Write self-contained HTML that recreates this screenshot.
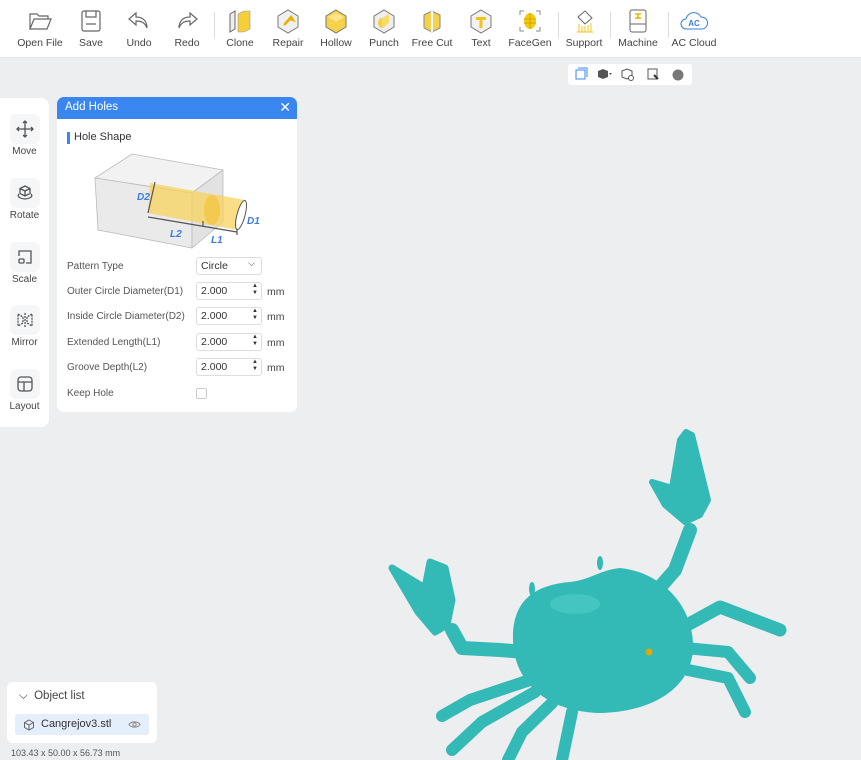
<!DOCTYPE html>
<html><head><meta charset="utf-8"><style>
*{margin:0;padding:0;box-sizing:border-box}
body{width:861px;height:760px;overflow:hidden;background:#eceef0;font-family:"Liberation Sans",sans-serif;color:#333;position:relative}
.tb{position:absolute;left:0;top:0;width:861px;height:58px;background:#fff;border-bottom:1px solid #e4e6e8}
.ti{position:absolute;top:8px;width:60px;margin-left:-30px;text-align:center;font-size:10.5px;color:#444}
.ti svg{display:block;margin:0 auto 3px;width:26px;height:26px}
.sep{position:absolute;top:12px;width:1px;height:26px;background:#ddd}
.side{position:absolute;left:0;top:98px;width:49px;height:329px;background:#fff;border-radius:0 8px 8px 0}
.si{position:absolute;left:0;width:49px;text-align:center;font-size:10px;color:#444}
.si .b{width:30px;height:30px;margin:0 auto 2px;background:#f4f6f8;border-radius:6px;display:flex;align-items:center;justify-content:center}
.dlg{position:absolute;left:57px;top:97px;width:240px;height:315px;background:#fff;border-radius:7px;overflow:hidden}
.hd{height:22px;background:#3a86f0;color:#fff;font-size:11.5px;padding:4px 0 0 8px;position:relative}
.row{position:absolute;left:10px;font-size:10px;color:#555}
.inp{position:absolute;left:139px;width:66px;height:18px;border:1px solid #ddd;border-radius:3px;font-size:10.5px;padding:2px 0 0 4px;color:#333}
.mm{position:absolute;left:210px;font-size:10.5px;color:#444}
</style></head><body>
<div class="tb">
<div class="ti" style="left:40px"><svg viewBox="0 0 26 26" fill="none" stroke="#666" stroke-width="1.2"><path d="M3 6h7l2 2h9v3H7L3 21z M3 21l4-10h17l-4 10z"/></svg>Open File</div>
<div class="ti" style="left:91px"><svg viewBox="0 0 26 26" fill="none" stroke="#666" stroke-width="1.2"><rect x="4" y="3" width="18" height="20" rx="2"/><path d="M8 3v6h10V3M8 16h10"/></svg>Save</div>
<div class="ti" style="left:139px"><svg viewBox="0 0 26 26" fill="none" stroke="#666" stroke-width="1.2"><path d="M10 5L3 11l7 6v-4c6 0 9 2 11 7 0-7-4-11-11-11z"/></svg>Undo</div>
<div class="ti" style="left:187px"><svg viewBox="0 0 26 26" fill="none" stroke="#666" stroke-width="1.2"><path d="M16 5l7 6-7 6v-4c-6 0-9 2-11 7 0-7 4-11 11-11z"/></svg>Redo</div>
<div class="sep" style="left:214px"></div>
<div class="ti" style="left:240px"><svg viewBox="0 0 26 26"><path d="M3 6l5-3v18l-5 3z" fill="#eee" stroke="#666"/><path d="M11 6l6-3h6v18l-6 3h-6z" fill="#f5cf3a" stroke="#999" stroke-width=".6"/></svg>Clone</div>
<div class="ti" style="left:288px"><svg viewBox="0 0 26 26"><path d="M13 2l10 6v11l-10 6-10-6V8z" fill="#f0f0f0" stroke="#777"/><path d="M9 17l6-6 3 1-2-3z" stroke="#e7b200" stroke-width="2.4" fill="none"/></svg>Repair</div>
<div class="ti" style="left:336px"><svg viewBox="0 0 26 26"><path d="M13 2l10 6v11l-10 6-10-6V8z" fill="#f6d24a" stroke="#777"/><path d="M13 14l-8-5 8-4 8 4z" fill="#fbe48a"/></svg>Hollow</div>
<div class="ti" style="left:384px"><svg viewBox="0 0 26 26"><path d="M13 2l10 6v11l-10 6-10-6V8z" fill="#eee" stroke="#777"/><ellipse cx="11" cy="15" rx="4" ry="5" fill="#f5cf3a"/><path d="M11 10l7-4v9l-7 5z" fill="#f8dc6a"/></svg>Punch</div>
<div class="ti" style="left:432px"><svg viewBox="0 0 26 26"><path d="M5 7l8-4 8 4v13l-8 4-8-4z" fill="#f6d24a" stroke="#888"/><path d="M13 3v21" stroke="#fff" stroke-width="2"/></svg>Free Cut</div>
<div class="ti" style="left:481px"><svg viewBox="0 0 26 26"><path d="M13 2l10 6v11l-10 6-10-6V8z" fill="#f2f2f2" stroke="#777"/><path d="M8 9h10v3h-3.5v8h-3v-8H8z" fill="#f0c419"/></svg>Text</div>
<div class="ti" style="left:530px"><svg viewBox="0 0 26 26"><path d="M3 7V3h4M19 3h4v4M23 19v4h-4M7 23H3v-4" stroke="#888" fill="none"/><ellipse cx="13" cy="13" rx="6" ry="8" fill="#f5cb10"/><path d="M7 11h12M7 15h12M13 5v16" stroke="#c99a00" stroke-width=".8"/></svg>FaceGen</div>
<div class="sep" style="left:558px"></div>
<div class="ti" style="left:584px"><svg viewBox="0 0 26 26"><path d="M7 9l7-6 7 7-7 6z" fill="#fff" stroke="#666"/><path d="M8 24V16M11 24v-6M14 24v-6M17 24v-7M20 24v-9M6 24h16" stroke="#f0c419"/></svg>Support</div>
<div class="sep" style="left:610px"></div>
<div class="ti" style="left:638px"><svg viewBox="0 0 26 26"><rect x="5" y="2" width="16" height="22" rx="2" fill="#fff" stroke="#666"/><path d="M5 16h16" stroke="#666"/><path d="M10 6h6M13 6v5M10 10h6" stroke="#f0b400" stroke-width="1.5"/></svg>Machine</div>
<div class="sep" style="left:668px"></div>
<div class="ti" style="left:694px"><svg viewBox="0 0 30 26" style="width:30px"><path d="M7 21a5 5 0 0 1 0-10 8 8 0 0 1 15-2 6 6 0 0 1 1 12z" fill="#fff" stroke="#3a7be0"/><text x="15" y="18" font-size="8" font-weight="bold" fill="#3a7be0" text-anchor="middle" font-family="Liberation Sans">AC</text></svg>AC Cloud</div>
</div>

<div style="position:absolute;left:568px;top:64px;width:124px;height:21px;background:#fff;border-radius:3px">
<svg width="124" height="21"><rect x="8" y="6" width="9" height="9" fill="none" stroke="#3a86f0"/><path d="M10 4h9v9" stroke="#3a86f0" fill="none"/><path d="M30 7l5-2 5 2v6l-5 2-5-2z" fill="#555"/><path d="M41 9h3l-1.5 2z" fill="#555"/><path d="M54 7l5-2 5 2v6l-5 2-5-2z" fill="none" stroke="#555"/><circle cx="63" cy="14" r="2.5" fill="#fff" stroke="#555"/><rect x="80" y="5" width="9" height="10" fill="none" stroke="#555"/><path d="M86 11l4 4" stroke="#333" stroke-width="2"/><circle cx="110" cy="11" r="5.5" fill="#777"/></svg></div>

<div class="side">
<div class="si" style="top:16px"><div class="b"><svg width="18" height="18" viewBox="0 0 18 18" stroke="#555" fill="none" stroke-width="1.3"><path d="M9 1v16M1 9h16M7 3l2-2 2 2M7 15l2 2 2-2M3 7L1 9l2 2M15 7l2 2-2 2"/></svg></div>Move</div>
<div class="si" style="top:80px"><div class="b"><svg width="18" height="18" viewBox="0 0 18 18" stroke="#555" fill="none" stroke-width="1.3"><path d="M9 2l5 2.5v5L9 12 4 9.5v-5zM4 4.5L9 7l5-2.5M9 7v5M3 10c-3 3 3 5 6 5s9-2 6-5"/></svg></div>Rotate</div>
<div class="si" style="top:144px"><div class="b"><svg width="18" height="18" viewBox="0 0 18 18" stroke="#555" fill="none" stroke-width="1.3"><path d="M3 8V3h12v12h-5"/><rect x="3" y="11" width="5" height="4" rx="1"/></svg></div>Scale</div>
<div class="si" style="top:207px"><div class="b"><svg width="18" height="18" viewBox="0 0 18 18" stroke="#555" fill="none" stroke-width="1.3"><path d="M2 3l5 3v6l-5 3zM16 3l-5 3v6l5 3zM9 2v14" stroke-dasharray="2 1"/></svg></div>Mirror</div>
<div class="si" style="top:271px"><div class="b"><svg width="18" height="18" viewBox="0 0 18 18" stroke="#555" fill="none" stroke-width="1.3"><rect x="2" y="2" width="14" height="14" rx="3"/><path d="M2 7h14M8 7v9"/></svg></div>Layout</div>
</div>

<div class="dlg">
<div class="hd">Add Holes<span style="position:absolute;right:6px;top:2px;font-size:14px">✕</span></div>
<div style="position:absolute;left:10px;top:35px;width:3px;height:12px;background:#3a86f0"></div>
<div style="position:absolute;left:17px;top:34px;font-size:11px;color:#333">Hole Shape</div>
<svg style="position:absolute;left:0;top:0" width="240" height="160" viewBox="57 97 240 160">
<path d="M95 178L132 154L223 170L192 193Z" fill="#f2f2f2" stroke="#bbb" stroke-width=".8"/>
<path d="M95 178L192 193L192 248L98 230Z" fill="#eaeaea" stroke="#bbb" stroke-width=".8"/>
<path d="M192 193L223 170L223 222L192 248Z" fill="#e2e2e2" stroke="#bbb" stroke-width=".8"/>
<path d="M150 183L245 200L237 230L148 213Z" fill="#f8d35c" opacity=".75"/>
<ellipse cx="212" cy="210" rx="8" ry="15" fill="#f4c030" opacity=".6"/>
<ellipse cx="241" cy="215" rx="4" ry="15" transform="rotate(15 241 215)" fill="#fff" stroke="#555"/>
<path d="M155 182L148 213M148 217L237 232M203 221v6M237 229v6" stroke="#555" stroke-width="1.2"/>
<g font-size="10" fill="#3a7be0" font-weight="bold" font-style="italic" font-family="Liberation Sans"><text x="137" y="200">D2</text><text x="247" y="224">D1</text><text x="170" y="237">L2</text><text x="211" y="243">L1</text></g>
</svg>
<div class="row" style="top:164px">Pattern Type</div>
<div class="inp" style="top:160px;width:66px">Circle<span style="position:absolute;right:6px;top:0;font-size:9px">⌵</span></div>
<div class="row" style="top:189px">Outer Circle Diameter(D1)</div><div class="inp" style="top:185px">2.000<span style="position:absolute;right:3px;top:0;font-size:6px;line-height:7px">▲<br>▼</span></div><div class="mm" style="top:189px">mm</div>
<div class="row" style="top:214px">Inside Circle Diameter(D2)</div><div class="inp" style="top:210px">2.000<span style="position:absolute;right:3px;top:0;font-size:6px;line-height:7px">▲<br>▼</span></div><div class="mm" style="top:214px">mm</div>
<div class="row" style="top:240px">Extended Length(L1)</div><div class="inp" style="top:236px">2.000<span style="position:absolute;right:3px;top:0;font-size:6px;line-height:7px">▲<br>▼</span></div><div class="mm" style="top:240px">mm</div>
<div class="row" style="top:265px">Groove Depth(L2)</div><div class="inp" style="top:261px">2.000<span style="position:absolute;right:3px;top:0;font-size:6px;line-height:7px">▲<br>▼</span></div><div class="mm" style="top:265px">mm</div>
<div class="row" style="top:291px">Keep Hole</div>
<div style="position:absolute;left:139px;top:291px;width:11px;height:11px;border:1px solid #ccc;border-radius:2px"></div>
</div>

<svg style="position:absolute;left:0;top:0" width="861" height="760">
<g stroke="#33b9b6" stroke-linecap="round" stroke-linejoin="round" fill="none">
<path d="M660 640L720 607L780 630" stroke-width="13"/>
<path d="M685 648L728 652L750 678" stroke-width="12"/>
<path d="M688 670L728 678L745 712" stroke-width="12"/>
<path d="M530 680L470 700L442 716" stroke-width="12"/>
<path d="M535 692L482 722L452 750" stroke-width="12"/>
<path d="M552 703L522 732L508 760" stroke-width="12"/>
<path d="M572 712L562 760" stroke-width="12"/>
<path d="M525 652L500 650L462 648L452 630" stroke-width="14"/>
<path d="M640 610L675 570L690 530" stroke-width="14"/>
</g>
<path d="M392 568L425 588L430 562L445 568L452 600L447 625L435 632L418 612Z" fill="#33b9b6" stroke="#33b9b6" stroke-width="7" stroke-linejoin="round"/>
<path d="M652 482L672 488L680 440L686 432L692 435L708 500L700 515L685 522L665 505Z" fill="#33b9b6" stroke="#33b9b6" stroke-width="6" stroke-linejoin="round"/>
<path d="M513 640C512 600 535 585 570 582C590 580 600 570 620 568C660 572 695 605 693 650C690 690 650 712 600 713C550 712 514 685 513 640Z" fill="#33b9b6"/>
<ellipse cx="575" cy="604" rx="25" ry="10" fill="#4ccbc8" opacity=".7"/>
<ellipse cx="532" cy="589" rx="3" ry="7" fill="#33b9b6"/><ellipse cx="600" cy="563" rx="3" ry="7" fill="#33b9b6"/>
<circle cx="649" cy="652" r="3.5" fill="#e0a800"/>
</svg>

<div style="position:absolute;left:7px;top:682px;width:150px;height:61px;background:#fff;border-radius:6px">
<div style="position:absolute;left:12px;top:8px;font-size:11.5px;color:#444">⌵&nbsp; Object list</div>
<div style="position:absolute;left:8px;top:32px;width:134px;height:21px;background:#e5eefb;border-radius:3px;font-size:11px;color:#333;padding:4px 0 0 26px">Cangrejov3.stl<svg style="position:absolute;left:8px;top:5px" width="12" height="12" viewBox="0 0 12 12" fill="none" stroke="#666"><path d="M6 1l4.5 2.5v5L6 11 1.5 8.5v-5zM1.5 3.5L6 6l4.5-2.5M6 6v5"/></svg><svg style="position:absolute;right:8px;top:6px" width="13" height="9" viewBox="0 0 13 9" fill="none" stroke="#888"><path d="M1 4.5C3 1 10 1 12 4.5C10 8 3 8 1 4.5z"/><circle cx="6.5" cy="4.5" r="1.7"/></svg></div>
</div>
<div style="position:absolute;left:11px;top:748px;font-size:9px;color:#555">103.43 x 50.00 x 56.73 mm</div>
</body></html>
